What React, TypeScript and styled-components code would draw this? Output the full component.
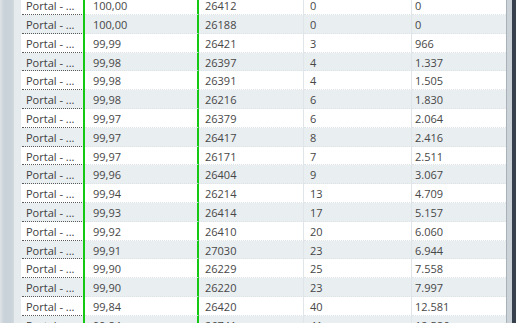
import React from 'react'
import styled, { createGlobalStyle } from 'styled-components'

const GlobalStyle = createGlobalStyle`
  html, body {
    margin: 0;
    padding: 0;
    overflow: hidden;
    background: #ffffff;
  }
`

const Frame = styled.div`
  display: flex;
  width: 516px;
  height: 323px;
  overflow: hidden;
  font-family: "Segoe UI", "Open Sans", "Noto Sans", sans-serif;
  font-size: 11px;
  color: #474747;
`

const LeftRail = styled.div`
  width: 14px;
  flex-shrink: 0;
  background: linear-gradient(to right, #dfe4e7 0%, #c8d2d8 30%, #c9d3d9 80%, #d3dbe0 100%);
`

const Gutter = styled.div`
  width: 7px;
  flex-shrink: 0;
  background: #e6ebee;
`

const Grid = styled.div`
  width: 485px;
  flex-shrink: 0;
  overflow: hidden;
`

// the list is scrolled a few pixels down
const Rows = styled.div`
  margin-top: -3.8px;
`

const Row = styled.div<{ $alt: boolean }>`
  display: flex;
  height: 18.8px;
  background: ${p => (p.$alt ? '#e9eef1' : '#ffffff')};
`

const Cell = styled.div<{ $w: number; $pad: number; $sep?: 'green' | 'light' }>`
  box-sizing: border-box;
  width: ${p => p.$w}px;
  flex-shrink: 0;
  padding-left: ${p => p.$pad}px;
  padding-top: 1px;
  line-height: 18px;
  white-space: nowrap;
  overflow: hidden;
  border-bottom: 1px dotted #dde3e7;
  border-right: ${p =>
    p.$sep === 'green' ? '2px solid #14c814' : p.$sep === 'light' ? '1px solid #dfe5e8' : 'none'};
`

const LinkCell = styled.div`
  box-sizing: border-box;
  width: 64px;
  flex-shrink: 0;
  padding: 0 1px;
  border-right: 2px solid #14c814;
`

const LinkText = styled.div`
  height: 100%;
  box-sizing: border-box;
  padding-left: 4px;
  padding-top: 1px;
  line-height: 17px;
  color: #404040;
  border-bottom: 1px dotted #5a5a5a;
  white-space: nowrap;
`

const RightEdge = styled.div`
  display: flex;
  flex: 1;
`

const EdgeLine = styled.div`
  width: 1px;
  background: #a9b2b9;
`

const EdgeTrack = styled.div`
  width: 5px;
  background: #cbd3d8;
`

const EdgeDark = styled.div`
  flex: 1;
  background: #37414d;
`

const data: [string, string, string, string][] = [
  ['100,00', '26412', '0', '0'],
  ['100,00', '26188', '0', '0'],
  ['99,99', '26421', '3', '966'],
  ['99,98', '26397', '4', '1.337'],
  ['99,98', '26391', '4', '1.505'],
  ['99,98', '26216', '6', '1.830'],
  ['99,97', '26379', '6', '2.064'],
  ['99,97', '26417', '8', '2.416'],
  ['99,97', '26171', '7', '2.511'],
  ['99,96', '26404', '9', '3.067'],
  ['99,94', '26214', '13', '4.709'],
  ['99,93', '26414', '17', '5.157'],
  ['99,92', '26410', '20', '6.060'],
  ['99,91', '27030', '23', '6.944'],
  ['99,90', '26229', '25', '7.558'],
  ['99,90', '26220', '23', '7.997'],
  ['99,84', '26420', '40', '12.581'],
  ['99,84', '26741', '41', '12.586'],
]

const App: React.FC = () => {
  return (
    <>
      <GlobalStyle />
      <Frame>
        <LeftRail />
        <Gutter />
        <Grid>
          <Rows>
            {data.map((r, i) => (
              <Row key={i} $alt={i % 2 === 1}>
                <LinkCell>
                  <LinkText>Portal - ...</LinkText>
                </LinkCell>
                <Cell $w={114} $pad={8} $sep="green">{r[0]}</Cell>
                <Cell $w={105} $pad={6} $sep="light">{r[1]}</Cell>
                <Cell $w={108} $pad={6} $sep="light">{r[2]}</Cell>
                <Cell $w={94} $pad={3}>{r[3]}</Cell>
              </Row>
            ))}
          </Rows>
        </Grid>
        <RightEdge>
          <EdgeLine />
          <EdgeTrack />
          <EdgeDark />
        </RightEdge>
      </Frame>
    </>
  )
}

export default App
